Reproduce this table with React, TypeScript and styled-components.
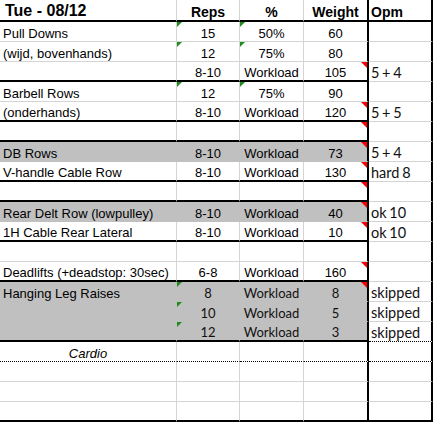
import React from "react";
import styled, { createGlobalStyle } from "styled-components";

const GlobalStyle = createGlobalStyle`
  html, body {
    margin: 0;
    padding: 0;
    background: #ffffff;
  }
`;

const GRID = "#d4d4d4";
const FILL = "#c0c0c0";
const ARIAL = `"Liberation Sans", Arial, sans-serif`;
const CALIBRI = `Lato, "Open Sans", sans-serif`;

type Line = "grid" | "thick" | "dotted";
type Col = 0 | 1 | 2 | 3 | 4;
type Face = "arial" | "calibri" | "note";

type Row = {
  cells: string[];
  gray?: boolean;
  line?: Line;
  eLine?: Line;
  greenB?: boolean;
  greenC?: boolean;
  redD?: boolean;
  calibri?: boolean;
  italic?: boolean;
};

const rows: Row[] = [
  { cells: ["Pull Downs", "15", "50%", "60", ""], greenB: true, greenC: true },
  { cells: ["(wijd, bovenhands)", "12", "75%", "80", ""], greenB: true, greenC: true },
  { cells: ["", "8-10", "Workload", "105", "5 + 4"], redD: true, line: "thick" },
  { cells: ["Barbell Rows", "12", "75%", "90", ""], greenB: true, greenC: true },
  { cells: ["(onderhands)", "8-10", "Workload", "120", "5 + 5"], redD: true, line: "thick" },
  { cells: ["", "", "", "", ""], redD: true, line: "thick" },
  { cells: ["DB Rows", "8-10", "Workload", "73", "5 + 4"], gray: true, redD: true },
  { cells: ["V-handle Cable Row", "8-10", "Workload", "130", "hard 8"], redD: true, line: "thick" },
  { cells: ["", "", "", "", ""], redD: true, line: "thick" },
  { cells: ["Rear Delt Row (lowpulley)", "8-10", "Workload", "40", "ok 10"], gray: true, redD: true },
  { cells: ["1H Cable Rear Lateral", "8-10", "Workload", "10", "ok 10"], redD: true, line: "thick" },
  { cells: ["", "", "", "", ""] },
  { cells: ["Deadlifts (+deadstop: 30sec)", "6-8", "Workload", "160", ""], redD: true, line: "thick" },
  { cells: ["Hanging Leg Raises", "8", "Workload", "8", "skipped"], gray: true, greenB: true, redD: true, calibri: true },
  { cells: ["", "10", "Workload", "5", "skipped"], gray: true, greenB: true, calibri: true },
  { cells: ["", "12", "Workload", "3", "skipped"], gray: true, greenB: true, calibri: true, line: "thick", eLine: "dotted" },
  { cells: ["Cardio", "", "", "", ""], italic: true, line: "dotted", eLine: "dotted" },
  { cells: ["", "", "", "", ""] },
  { cells: ["", "", "", "", ""] },
  { cells: ["", "", "", "", ""], line: "thick", eLine: "thick" },
];

const Sheet = styled.div`
  display: grid;
  grid-template-columns: 177px 63px 64px 65px 64px;
  grid-template-rows: 22px repeat(20, 20px);
  width: 433px;
  color: #000;
`;

const lineCss = (line: Line | undefined, gray: boolean) => {
  if (line === "thick") return "2px solid #000";
  if (line === "dotted") return "1px dotted #000";
  return `1px solid ${gray ? FILL : GRID}`;
};

const faces = {
  arial: `font-family: ${ARIAL}; font-size: 13px; line-height: 15px;`,
  calibri: `font-family: ${CALIBRI}; font-size: 13px; line-height: 15px; color: #111;`,
  note: `font-family: ${CALIBRI}; font-size: 14.5px; line-height: 17px; word-spacing: -1px; color: #111;`,
};

const Cell = styled.div<{
  $col: Col;
  $gray?: boolean;
  $bottom: string;
  $align: "left" | "center";
  $face: Face;
  $italic?: boolean;
}>`
  position: relative;
  box-sizing: border-box;
  display: flex;
  align-items: flex-end;
  justify-content: ${(p) => (p.$align === "center" ? "center" : "flex-start")};
  padding-left: ${(p) => (p.$col === 4 ? "2px" : p.$col === 0 && p.$align === "left" ? "3px" : "0")};
  background: ${(p) => (p.$gray ? FILL : "#fff")};
  border-bottom: ${(p) => p.$bottom};
  border-right: ${(p) =>
    p.$col >= 3 ? "2px solid #000" : `1px solid ${p.$gray ? FILL : GRID}`};
  ${(p) => faces[p.$face]}
  font-style: ${(p) => (p.$italic ? "italic" : "normal")};
  white-space: nowrap;
`;

const HeadCell = styled.div<{ $col: Col; $title?: boolean }>`
  box-sizing: border-box;
  display: flex;
  align-items: flex-end;
  justify-content: ${(p) => (p.$col === 0 || p.$col === 4 ? "flex-start" : "center")};
  padding-left: ${(p) => (p.$col === 0 ? "5px" : p.$col === 4 ? "2px" : "0")};
  border-bottom: 2px solid #000;
  border-right: ${(p) => (p.$col >= 3 ? "2px solid #000" : `1px solid ${GRID}`)};
  font-family: ${ARIAL};
  font-weight: bold;
  font-size: ${(p) => (p.$title ? "16px" : "14px")};
  line-height: ${(p) => (p.$title ? "18px" : "16px")};
  white-space: nowrap;
`;

const GreenMark = styled.span`
  position: absolute;
  top: 0;
  left: 0;
  width: 0;
  height: 0;
  border-top: 5px solid #1e8c1e;
  border-right: 5px solid transparent;
`;

const RedMark = styled.span`
  position: absolute;
  top: 0;
  right: 0;
  width: 0;
  height: 0;
  border-top: 6px solid #ff0000;
  border-left: 6px solid transparent;
`;

const heads = ["Tue - 08/12", "Reps", "%", "Weight", "Opm"];

export default function App() {
  return (
    <>
      <GlobalStyle />
      <Sheet>
        {heads.map((h, i) => (
          <HeadCell key={`h${i}`} $col={i as Col} $title={i === 0}>
            {h}
          </HeadCell>
        ))}
        {rows.map((r, ri) =>
          r.cells.map((text, ci) => {
            const col = ci as Col;
            const isE = col === 4;
            const gray = !isE && !!r.gray;
            const bottom = isE ? lineCss(r.eLine, false) : lineCss(r.line, gray);
            const face: Face = isE ? "note" : r.calibri && col > 0 ? "calibri" : "arial";
            const align = col === 0 ? (r.italic ? "center" : "left") : isE ? "left" : "center";
            return (
              <Cell
                key={`${ri}-${ci}`}
                $col={col}
                $gray={gray}
                $bottom={bottom}
                $align={align}
                $face={face}
                $italic={r.italic && col === 0}
              >
                {col === 1 && r.greenB && <GreenMark />}
                {col === 2 && r.greenC && <GreenMark />}
                {col === 3 && r.redD && <RedMark />}
                {text}
              </Cell>
            );
          })
        )}
      </Sheet>
    </>
  );
}
